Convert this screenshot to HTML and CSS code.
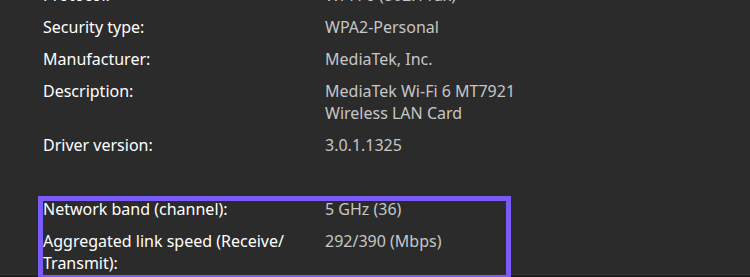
FILE: index.html
```html
<!DOCTYPE html>
<html lang="en">
<head>
<meta charset="utf-8">
<title>Wi-Fi properties</title>
<link rel="stylesheet" href="styles.css">
</head>
<body>
<div class="page">
  <dl class="props">
    <div class="row"><dt>Protocol:</dt><dd>Wi-Fi 6 (802.11ax)</dd></div>
    <div class="row"><dt>Security type:</dt><dd>WPA2-Personal</dd></div>
    <div class="row"><dt>Manufacturer:</dt><dd>MediaTek, Inc.</dd></div>
    <div class="row"><dt>Description:</dt><dd>MediaTek Wi-Fi 6 MT7921<br>Wireless LAN Card</dd></div>
    <div class="row"><dt>Driver version:</dt><dd>3.0.1.1325</dd></div>
    <div class="row spacer"></div>
    <div class="row"><dt>Network band (channel):</dt><dd>5 GHz (36)</dd></div>
    <div class="row"><dt>Aggregated link speed (Receive/<wbr>Transmit):</dt><dd>292/390 (Mbps)</dd></div>
  </dl>
  <div class="footer"></div>
  <div class="highlight"></div>
</div>
</body>
</html>
```
FILE: styles.css
```css
html, body {
  margin: 0;
  padding: 0;
  background: #2b2b2b;
}
body {
  font-family: "Noto Sans", "Open Sans", sans-serif;
  font-size: 16px;
  overflow: hidden;
}
.page {
  position: relative;
  width: 750px;
  height: 277px;
  overflow: hidden;
}
.props {
  margin: -16px 0 0 0;
  padding: 0 0 0 43px;
  display: flex;
  flex-direction: column;
  gap: 10px;
}
.row {
  display: grid;
  grid-template-columns: 270px 1fr;
  column-gap: 12px;
  line-height: 22px;
}
.spacer {
  height: 22px;
}
dt {
  margin: 0;
  color: #ffffff;
}
dd {
  margin: 0;
  color: #c6c6c6;
}
.footer {
  height: 3px;
  background: #1e1e1e;
  border-top: 1px solid #333333;
}
.highlight {
  position: absolute;
  left: 38px;
  top: 196px;
  width: 473px;
  height: 84px;
  box-sizing: border-box;
  border: 5px solid #7a5af8;
}
```
